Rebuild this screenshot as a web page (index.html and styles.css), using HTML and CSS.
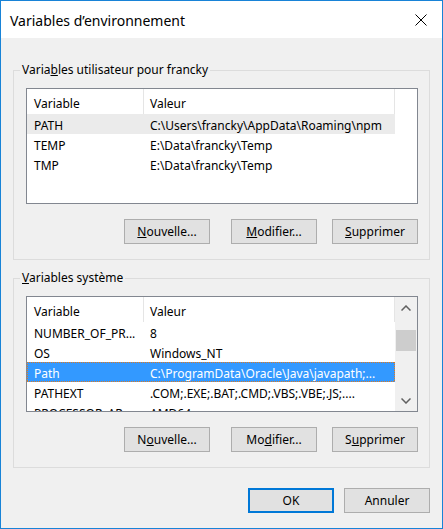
FILE: index.html
```html
<!DOCTYPE html>
<html lang="fr">
<head>
<meta charset="utf-8">
<title>Variables d’environnement</title>
<link rel="stylesheet" href="styles.css">
</head>
<body>
<div class="window">
  <div class="titlebar">
    <span class="title">Variables d’environnement</span>
    <svg class="close" width="12" height="12" viewBox="0 0 12 12"><path d="M0.5 0.5 L11.5 11.5 M11.5 0.5 L0.5 11.5" stroke="#000" stroke-width="1" fill="none"/></svg>
  </div>
  <div class="content">
    <fieldset class="group group-user">
      <legend>Varia<u>b</u>les utilisateur pour francky</legend>
      <div class="list">
        <div class="list-body">
          <div class="header"><div class="hcell c1">Variable</div><div class="hcell c2">Valeur</div></div>
          <div class="row inactive"><div class="cell c1">PATH</div><div class="cell c2">C:\Users\francky\AppData\Roaming\npm</div></div>
          <div class="row"><div class="cell c1">TEMP</div><div class="cell c2">E:\Data\francky\Temp</div></div>
          <div class="row"><div class="cell c1">TMP</div><div class="cell c2">E:\Data\francky\Temp</div></div>
        </div>
      </div>
      <div class="buttons">
        <button class="btn btn-new"><u>N</u>ouvelle...</button>
        <button class="btn btn-edit"><u>M</u>odifier...</button>
        <button class="btn"><u>S</u>upprimer</button>
      </div>
    </fieldset>
    <fieldset class="group group-sys">
      <legend><u>V</u>ariables système</legend>
      <div class="list">
        <div class="list-body">
          <div class="header"><div class="hcell c1">Variable</div><div class="hcell c2">Valeur</div></div>
          <div class="row"><div class="cell c1">NUMBER_OF_PR...</div><div class="cell c2">8</div></div>
          <div class="row"><div class="cell c1">OS</div><div class="cell c2">Windows_NT</div></div>
          <div class="row active"><div class="cell c1">Path</div><div class="cell c2">C:\ProgramData\Oracle\Java\javapath;...</div></div>
          <div class="row"><div class="cell c1">PATHEXT</div><div class="cell c2">.COM;.EXE;.BAT;.CMD;.VBS;.VBE;.JS;....</div></div>
          <div class="row"><div class="cell c1">PROCESSOR_AR...</div><div class="cell c2">AMD64</div></div>
        </div>
        <div class="scrollbar">
          <div class="arrow"><svg width="10" height="6" viewBox="0 0 10 6"><path d="M0.5 5.5 L5 1 L9.5 5.5" stroke="#606060" stroke-width="1.5" fill="none"/></svg></div>
          <div class="track"><div class="thumb"></div></div>
          <div class="arrow"><svg width="10" height="6" viewBox="0 0 10 6"><path d="M0.5 0.5 L5 5 L9.5 0.5" stroke="#606060" stroke-width="1.5" fill="none"/></svg></div>
        </div>
      </div>
      <div class="buttons">
        <button class="btn btn-new">N<u>o</u>uvelle...</button>
        <button class="btn btn-edit">Mo<u>d</u>ifier...</button>
        <button class="btn">S<u>u</u>pprimer</button>
      </div>
    </fieldset>
    <div class="footer">
      <button class="btn default">OK</button>
      <button class="btn">Annuler</button>
    </div>
  </div>
</div>
</body>
</html>
```

FILE: styles.css
```css
* { box-sizing: border-box; }
html, body { margin: 0; padding: 0; background: #ffffff; }
body {
  font-family: "Noto Sans", "Liberation Sans", sans-serif;
  font-size: 12px;
  color: #000;
}
.window {
  width: 443px;
  height: 529px;
  border: 1px solid #1883d7;
  background: #f0f0f0;
  display: flex;
  flex-direction: column;
}
.titlebar {
  height: 37px;
  flex: none;
  background: #ffffff;
  display: flex;
  align-items: center;
  justify-content: space-between;
  padding: 0 15px 0 9px;
}
.title { font-size: 14px; padding-top: 1px; }
.close { display: block; }
.content {
  padding: 0 12px;
  display: flex;
  flex-direction: column;
}
.group {
  margin: 0;
  border: 1px solid #dcdcdc;
  padding: 10px 11px 15px 12px;
  min-width: 0;
}
.group-user { margin-top: 24px; }
.group-sys { margin-top: 10px; }
.group legend {
  margin-left: -6px;
  padding: 0 2px;
  line-height: 16px;
}
.list {
  height: 116px;
  border: 1px solid #828790;
  background: #ffffff;
  display: flex;
  overflow: hidden;
}
.list-body {
  width: 368px;
  flex: none;
  overflow: hidden;
}
.header { display: flex; height: 25px; }
.hcell {
  line-height: 24px;
  padding-top: 3px;
  border-right: 1px solid #e5e5e5;
  white-space: nowrap;
  overflow: hidden;
}
.c1 { width: 117px; padding-left: 7px; flex: none; }
.c2 { width: 251px; padding-left: 6px; flex: none; }
.row { display: flex; height: 20px; line-height: 20px; }
.cell { white-space: nowrap; overflow: hidden; padding-top: 2px; }
.row.inactive { background: #ebebeb; }
.row.active {
  color: #ffffff;
  background:
    repeating-linear-gradient(90deg, #e07a1f 0 1px, transparent 1px 2px) left top / 100% 1px no-repeat,
    repeating-linear-gradient(90deg, #e07a1f 0 1px, transparent 1px 2px) left bottom / 100% 1px no-repeat,
    repeating-linear-gradient(180deg, #e07a1f 0 1px, transparent 1px 2px) left top / 1px 100% no-repeat,
    repeating-linear-gradient(180deg, #e07a1f 0 1px, transparent 1px 2px) right top / 1px 100% no-repeat,
    #3399ff;
}
.scrollbar {
  width: 22px;
  flex: none;
  background: #f0f0f0;
  display: flex;
  flex-direction: column;
}
.arrow {
  height: 21px;
  flex: none;
  display: flex;
  align-items: center;
  justify-content: center;
}
.arrow svg { display: block; }
.track { flex: 1; }
.thumb {
  margin: 12px 1px 0 1px;
  height: 21px;
  background: #cdcdcd;
}
.buttons {
  display: flex;
  justify-content: flex-end;
  margin-top: 15px;
}
.btn {
  width: 86px;
  height: 25px;
  padding: 0;
  margin: 0;
  background: #e1e1e1;
  border: 1px solid #adadad;
  font-family: inherit;
  font-size: 12px;
  color: #000;
}
.btn-new { margin-right: 21px; }
.btn-edit { margin-right: 15px; }
.footer {
  display: flex;
  justify-content: flex-end;
  gap: 10px;
  margin-top: 20px;
}
.btn.default { border: 2px solid #0078d7; }
```
